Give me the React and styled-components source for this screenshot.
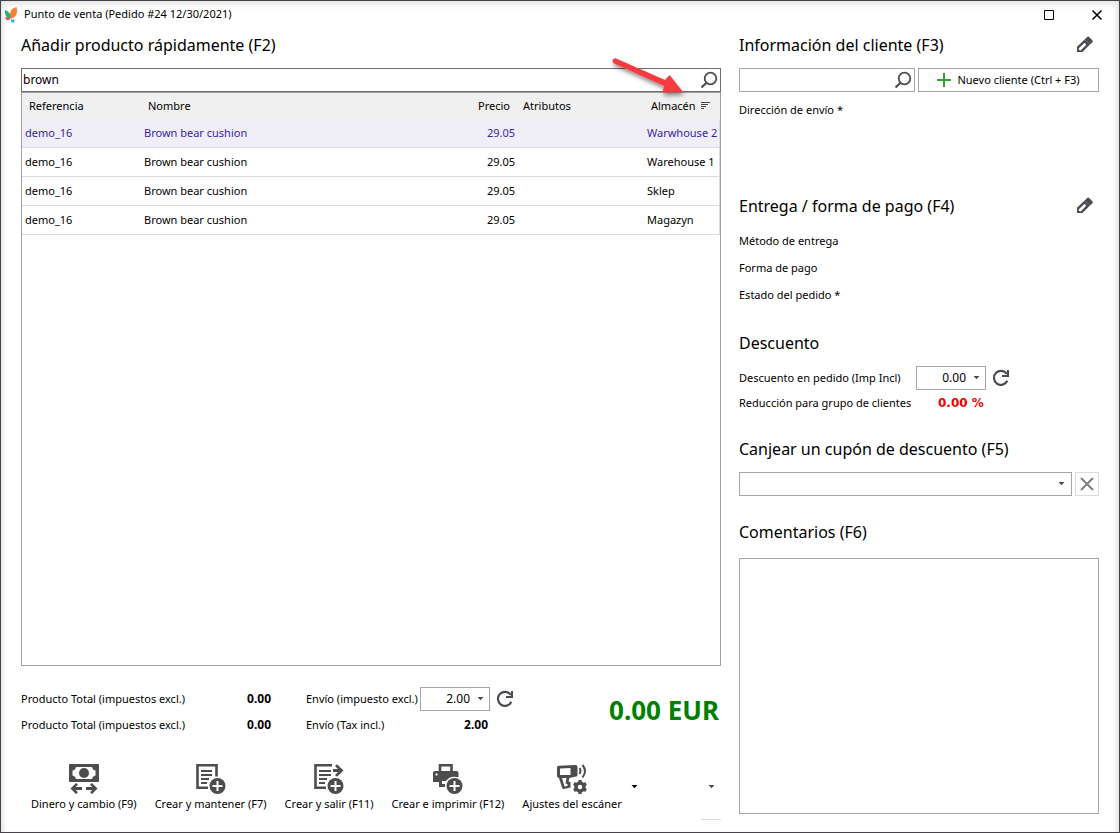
import React, { useState } from "react";
import styled, { createGlobalStyle, css } from "styled-components";

const GlobalStyle = createGlobalStyle`
  *, *::before, *::after {
    box-sizing: border-box;
  }
  body {
    margin: 0;
    background: #fff;
  }
  body, button, input, select, textarea {
    font-family: "Noto Sans", "Open Sans", sans-serif;
    font-size: 11px;
    color: #000;
  }
`;

// Window
const Window = styled.div`
  min-height: 100vh;
  display: flex;
  flex-direction: column;
  padding: 0 20px 12px;
  border: 1px solid #45424a;
  background: #fff;
  box-shadow: inset 0 4px 8px -2px #dedcdf, inset 6px 0 6px -5px #e6e6e8,
    inset -6px 0 6px -5px #e0e0e2;
`;

const TitleBar = styled.header`
  height: 28px;
  display: flex;
  align-items: center;
  gap: 6px;
  margin-left: -17px;
`;

const WindowTitle = styled.h1`
  flex: 1;
  margin: 0;
  padding-bottom: 2px;
  font-size: 11px;
  font-weight: 400;
  line-height: 24px;
`;

const IconButton = styled.button`
  display: flex;
  align-items: center;
  justify-content: center;
  padding: 0;
  border: 0;
  background: none;
  color: #4c4a52;
  cursor: pointer;
`;

const WindowButtons = styled.div`
  display: flex;
  gap: 36px;
  margin-right: -4px;
  ${IconButton} {
    color: #000;
  }
`;

const Body = styled.main`
  flex: 1;
  display: grid;
  grid-template-columns: minmax(0, 35fr) minmax(0, 18fr);
  column-gap: 18px;
`;

// Left column
const Sale = styled.section`
  display: flex;
  flex-direction: column;
`;

const Heading = styled.h2`
  flex: 1;
  margin: 0;
  font-size: 16px;
  font-weight: 400;
  line-height: 32px;
  white-space: nowrap;
`;

const HeadingRow = styled.div`
  display: flex;
  align-items: center;
  height: 32px;
  margin-bottom: 7px;
  ${IconButton} {
    margin-right: 5px;
  }
`;

const Field = styled.div`
  display: flex;
  align-items: center;
  flex: ${(props) => (props.$width ? `0 0 ${props.$width}` : "1")};
  min-width: 0;
  height: 24px;
  border: 1px solid ${(props) => (props.$dark ? "#6e6e6e" : "#a6a6a6")};
  background: #fff;
  ${IconButton} {
    width: ${(props) => (props.$width ? "18px" : "23px")};
    height: 22px;
  }
`;

const TextInput = styled.input`
  flex: 1;
  min-width: 0;
  height: 22px;
  padding: 0 1px 2px;
  border: 0;
  outline: 0;
  background: none;
  font-size: 12px;
  text-align: ${(props) => props.$align || "left"};
`;

const SearchBar = styled.div`
  position: relative;
  display: flex;
`;

const Pointer = styled.svg`
  position: absolute;
  top: -14px;
  right: 30px;
  pointer-events: none;
`;

const TableFrame = styled.div`
  flex: 1;
  border: 1px solid #a0a0a0;
`;

const Table = styled.table`
  width: 100%;
  table-layout: fixed;
  border-collapse: separate;
  border-spacing: 0;
`;

const HeadCell = styled.th`
  width: ${(props) => props.$width || "auto"};
  height: 26px;
  padding: 0 6px 2px 7px;
  background: #f0f0f0;
  font-weight: 400;
  text-align: ${(props) => props.$align || "left"};
  white-space: nowrap;
  svg {
    margin-left: 5px;
  }
`;

const Cell = styled.td`
  height: 29px;
  padding: 0 1px 2px 3px;
  border-bottom: 1px solid #dcdcdc;
  text-align: ${(props) => props.$align || "left"};
  white-space: nowrap;
  &:last-child {
    border-right: 1px solid #dcdcdc;
  }
`;

const Row = styled.tr`
  ${(props) =>
    props.$selected &&
    css`
      background: #f0eef6;
      color: #3a1fa8;
    `}
`;

// Totals
const Totals = styled.div`
  display: flex;
  align-items: flex-start;
  margin-top: 21px;
`;

const TotalsGrid = styled.div`
  display: grid;
  grid-template-columns: ${(props) => props.$columns};
  grid-auto-rows: 24px;
  row-gap: 2px;
  align-items: center;
  margin-right: 35px;
  white-space: nowrap;
  > label,
  > span,
  > output {
    padding-bottom: 2px;
  }
`;

const Amount = styled.output`
  font-size: 12px;
  font-weight: 700;
  text-align: right;
  padding-right: ${(props) => (props.$inset ? "2px" : "0")};
`;

const GrandTotal = styled.output`
  margin-left: auto;
  padding-right: 2px;
  color: #008000;
  font-size: 26px;
  font-weight: 700;
  line-height: 46px;
  white-space: nowrap;
`;

// Bottom toolbar
const Toolbar = styled.div`
  display: flex;
  gap: 18px;
  height: 57px;
  margin-top: 26px;
  padding-left: 10px;
`;

const ToolButton = styled.button`
  display: flex;
  flex-direction: column;
  align-items: center;
  height: 50px;
  padding: 1px 0 0;
  border: 0;
  background: none;
  color: #4d4d4d;
  cursor: pointer;
`;

const ToolLabel = styled.span`
  color: #000;
  line-height: 18px;
  white-space: nowrap;
`;

const MenuButton = styled(IconButton)`
  width: 10px;
  height: 47px;
  margin-left: -10px;
  color: #000;
`;

const OverflowButton = styled(IconButton)`
  width: 20px;
  height: 57px;
  margin-left: auto;
  padding-bottom: 8px;
  border-bottom: 1px solid #dcdcdc;
`;

// Right column
const Side = styled.aside`
  display: flex;
  flex-direction: column;
  padding-bottom: 6px;
`;

const Group = styled.section`
  display: flex;
  flex-direction: column;
  min-height: ${(props) => props.$height || "auto"};
  ${(props) =>
    props.$grow &&
    css`
      flex: 1;
    `}
`;

const Controls = styled.div`
  display: flex;
  align-items: center;
  gap: 3px;
`;

const Line = styled.div`
  display: flex;
  align-items: center;
  height: 27px;
  padding-bottom: 4px;
  ${Controls} + & {
    margin-top: 6px;
  }
`;

const DiscountLine = styled.div`
  display: flex;
  align-items: center;
  height: 24px;
  margin-bottom: 1px;
`;

const FieldLabel = styled.label`
  flex: 0 0 177px;
  padding-bottom: 2px;
  white-space: nowrap;
`;

const DetailLabel = styled.span`
  white-space: nowrap;
`;

const NewCustomerButton = styled.button`
  flex: 0 0 181px;
  height: 24px;
  display: flex;
  align-items: center;
  justify-content: center;
  gap: 6px;
  padding: 0;
  border: 1px solid #a6a6a6;
  background: #fff;
  white-space: nowrap;
  span {
    padding-bottom: 2px;
  }
`;

const Percent = styled.output`
  margin-left: 22px;
  color: #f00000;
  font-family: "DejaVu Sans", sans-serif;
  font-size: 12px;
  font-weight: 700;
`;

const Reload = styled(IconButton)`
  margin-left: 6px;
`;

const SelectFrame = styled.div`
  flex: 1;
  display: grid;
  align-items: center;
  height: 24px;
  border: 1px solid #a6a6a6;
  color: #4c4a52;
  > * {
    grid-area: 1 / 1;
  }
  svg {
    justify-self: end;
    margin-right: 6px;
    pointer-events: none;
  }
`;

const Select = styled.select`
  appearance: none;
  height: 22px;
  padding: 0 20px 0 4px;
  border: 0;
  background: none;
`;

const ClearButton = styled(IconButton)`
  width: 24px;
  height: 24px;
  border: 1px solid #dcdcdc;
  color: #808080;
`;

const Comments = styled.textarea`
  flex: 1;
  margin-top: 3px;
  padding: 4px;
  border: 1px solid #a6a6a6;
  resize: none;
`;

// Icons
const Logo = () => (
  <svg width="14" height="18" viewBox="0 0 14 18" aria-hidden="true">
    <path d="M12.500 1 C7 2.500 5 6 6.300 12.500 C12 12.500 14 7 12.500 1Z" fill="#f58232" />
    <path d="M.8 4 C.8 9.500 2.500 12.300 6.500 12.500 C7 8.500 5 5 .8 4Z" fill="#2fae7d" />
    <path d="M1 11.500 C2 14.500 4 15 6.500 13 C5 11.500 3 11 1 11.500Z" fill="#e8506b" />
    <path d="M7 13 L11 14 L9.500 17 L7 16Z" fill="#35b6e6" />
  </svg>
);

const Magnifier = () => (
  <svg width="18" height="18" viewBox="0 0 18 18" fill="none" stroke="currentColor" aria-hidden="true">
    <circle cx="10.500" cy="7.500" r="5.800" strokeWidth="1.800" />
    <path d="M6.500 11.800 L1.500 16.500" strokeWidth="2.200" />
  </svg>
);

const Pencil = () => (
  <svg width="18" height="18" viewBox="0 0 18 18" fill="currentColor" aria-hidden="true">
    <path
      fillRule="evenodd"
      d="M1 16 V10.800 L8.600 3.400 L14 8.600 L6.400 16Z M2.800 12.200 V13.800 L4.600 14.600 L9.800 9.200 Q10.600 7.400 8.400 6.900Z"
    />
    <path d="M8.600 3.400 L11.500 .8 Q12.200 .3 12.900 .8 L16.600 4.500 Q17.100 5.200 16.600 6 L14 8.600Z" />
  </svg>
);

const Caret = () => (
  <svg width="7" height="4" viewBox="0 0 7 4" fill="currentColor" aria-hidden="true">
    <path d="M0.500 0 H6.500 L3.500 3.300Z" />
  </svg>
);

const ReloadIcon = () => (
  <svg width="18" height="18" viewBox="0 0 18 18" fill="none" stroke="currentColor" aria-hidden="true">
    <path d="M15.300 11.800 A7 7 0 1 1 14.800 5" strokeWidth="2.200" />
    <path d="M16 1 V7 H10" strokeWidth="2" />
  </svg>
);

const SortIcon = () => (
  <svg width="9" height="8" viewBox="0 0 9 8" stroke="#444" aria-hidden="true">
    <path d="M0 .5 H9 M0 2.500 H7 M0 4.500 H5 M0 6.500 H3" strokeWidth="1" />
  </svg>
);

const PlusBadge = () => (
  <>
    <circle cx="21.500" cy="22" r="8" />
    <path d="M21.500 17 V27 M16.500 22 H26.500" stroke="#fff" strokeWidth="2" />
  </>
);

const ToolIcon = ({ children }) => (
  <svg width="30" height="31" viewBox="0 0 30 31" fill="currentColor" aria-hidden="true">
    {children}
  </svg>
);

const CashIcon = () => (
  <ToolIcon>
    <path
      fillRule="evenodd"
      d="M1 0 H29 Q30 0 30 1 V17 Q30 18 29 18 H1 Q0 18 0 17 V1 Q0 0 1 0Z M7 3 Q6.500 6 3.500 6.500 V11.500 Q6.500 12 7 15 H23 Q23.500 12 26.500 11.500 V6.500 Q23.500 6 23 3Z"
    />
    <circle cx="15" cy="9" r="5" />
    <path d="M1.500 24.500 L7 19 L9 20.800 L6.800 23 H13 V26 H6.800 L9 28.200 L7 30Z" />
    <path d="M28.500 24.500 L23 19 L21 20.800 L23.200 23 H17 V26 H23.200 L21 28.200 L23 30Z" />
  </ToolIcon>
);

const SaveIcon = () => (
  <ToolIcon>
    <path d="M20.500 12.500 V1.300 H1.500 V23.700 H12" fill="none" stroke="currentColor" strokeWidth="2.600" />
    <path d="M5 7 H16 M5 11 H16 M5 15 H13 M5 19 H11" stroke="currentColor" strokeWidth="2" />
    <PlusBadge />
  </ToolIcon>
);

const ExitIcon = () => (
  <ToolIcon>
    <path d="M18 1.300 H1.500 V23.700 H12" fill="none" stroke="currentColor" strokeWidth="2.600" />
    <path d="M5 7 H17 M5 11 H17 M5 15 H13 M5 19 H11" stroke="currentColor" strokeWidth="2" />
    <path d="M19 5 H24 L21 2 L23 .3 L29.500 6.500 L23 12.700 L21 11 L24 8 H19Z" />
    <PlusBadge />
  </ToolIcon>
);

const PrintIcon = () => (
  <ToolIcon>
    <path d="M7 7 V1.300 H18.500 V7" fill="none" stroke="currentColor" strokeWidth="2.600" />
    <path d="M2 7 H23.500 Q25.500 7 25.500 9 V13.300 Q17 11 13 17 H9 V20 H12 V23 H6 V18 H0 V9 Q0 7 2 7Z" />
    <path d="M2.500 10.500 H4.500" stroke="#fff" strokeWidth="2" />
    <PlusBadge />
  </ToolIcon>
);

const ScannerIcon = () => (
  <ToolIcon>
    <path
      fillRule="evenodd"
      d="M1.500 1.700 L18.500 1 Q20.500 1 20.500 3 V11 Q20.500 12.500 19 12.600 L12.500 14 L11.500 17.500 L13.500 18 V23.500 L7 25 Q5.500 25 5 23.500 L2 14 Q0 14 0 12 V3.500 Q0 2 1.500 1.700Z M3 4.500 V11 H13.500 V4Z M5 14 L7.500 22.500 L10.500 22 V20 L8.500 19.500 L9.500 14Z"
    />
    <path
      d="M22.500 4 Q24.500 6.500 22.500 10 M25.500 1 Q30.500 7 25.500 13.500"
      fill="none"
      stroke="currentColor"
      strokeWidth="2"
    />
    <circle cx="23" cy="23" r="4" fill="none" stroke="currentColor" strokeWidth="3.400" />
    <path
      d="M23 16 V19 M23 27 V30 M16.900 19.500 L19.500 21 M26.500 25 L29.100 26.500 M16.900 26.500 L19.500 25 M26.500 21 L29.100 19.500"
      stroke="currentColor"
      strokeWidth="3.200"
    />
  </ToolIcon>
);

const products = [
  { reference: "demo_16", name: "Brown bear cushion", price: "29.05", warehouse: "Warwhouse 2" },
  { reference: "demo_16", name: "Brown bear cushion", price: "29.05", warehouse: "Warehouse 1" },
  { reference: "demo_16", name: "Brown bear cushion", price: "29.05", warehouse: "Sklep" },
  { reference: "demo_16", name: "Brown bear cushion", price: "29.05", warehouse: "Magazyn" }
];

const tools = [
  { label: "Dinero y cambio (F9)", icon: CashIcon },
  { label: "Crear y mantener (F7)", icon: SaveIcon },
  { label: "Crear y salir (F11)", icon: ExitIcon },
  { label: "Crear e imprimir (F12)", icon: PrintIcon },
  { label: "Ajustes del escáner", icon: ScannerIcon }
];

const NumberField = ({ id, value }) => (
  <Field $width="70px">
    <TextInput id={id} defaultValue={value} $align="right" />
    <IconButton type="button" aria-label="Abrir calculadora">
      <Caret />
    </IconButton>
  </Field>
);

const ProductTable = () => {
  const [selected, setSelected] = useState(0);
  return (
    <TableFrame>
      <Table>
        <thead>
          <tr>
            <HeadCell $width="119px">Referencia</HeadCell>
            <HeadCell>Nombre</HeadCell>
            <HeadCell $width="60px" $align="right">Precio</HeadCell>
            <HeadCell $width="128px">Atributos</HeadCell>
            <HeadCell $width="76px">
              Almacén
              <SortIcon />
            </HeadCell>
          </tr>
        </thead>
        <tbody>
          {products.map((product, index) => (
            <Row key={product.warehouse} $selected={index === selected} onClick={() => setSelected(index)}>
              <Cell>{product.reference}</Cell>
              <Cell>{product.name}</Cell>
              <Cell $align="right">{product.price}</Cell>
              <Cell />
              <Cell>{product.warehouse}</Cell>
            </Row>
          ))}
        </tbody>
      </Table>
    </TableFrame>
  );
};

export default function App() {
  return (
    <>
      <GlobalStyle />
      <Window>
        <TitleBar>
          <Logo />
          <WindowTitle>Punto de venta (Pedido #24 12/30/2021)</WindowTitle>
          <WindowButtons>
            <IconButton type="button" aria-label="Maximizar">
              <svg width="12" height="12" viewBox="0 0 12 12" fill="none" stroke="currentColor">
                <path d="M1.500 1.500 H10.500 V10.500 H1.500Z" />
              </svg>
            </IconButton>
            <IconButton type="button" aria-label="Cerrar">
              <svg width="12" height="12" viewBox="0 0 12 12" fill="none" stroke="currentColor">
                <path d="M1.500 1.500 L10.500 10.500 M10.500 1.500 L1.500 10.500" strokeWidth="1.500" />
              </svg>
            </IconButton>
          </WindowButtons>
        </TitleBar>

        <Body>
          <Sale>
            <HeadingRow>
              <Heading>Añadir producto rápidamente (F2)</Heading>
            </HeadingRow>
            <SearchBar>
              <Field $dark>
                <TextInput aria-label="Buscar producto" defaultValue="brown" />
                <IconButton type="button" aria-label="Buscar">
                  <Magnifier />
                </IconButton>
              </Field>
              <Pointer width="84" height="46" viewBox="0 0 84 46" aria-hidden="true">
                <defs>
                  <filter id="soft" x="-20%" y="-20%" width="140%" height="160%">
                    <feDropShadow dx="1" dy="3" stdDeviation="2" floodOpacity="0.450" />
                  </filter>
                </defs>
                <path
                  d="M8.500 4.200 L58 26 L62.500 21 L76 38 L55.500 38.500 L57 32 L6.500 9.200 Q4 4.500 8.500 4.200Z"
                  fill="#f73b3f"
                  filter="url(#soft)"
                />
              </Pointer>
            </SearchBar>
            <ProductTable />

            <Totals>
              <TotalsGrid $columns="200px 50px">
                <span>Producto Total (impuestos excl.)</span>
                <Amount>0.00</Amount>
                <span>Producto Total (impuestos excl.)</span>
                <Amount>0.00</Amount>
              </TotalsGrid>
              <TotalsGrid $columns="114px 70px 24px">
                <label htmlFor="shipping">Envío (impuesto excl.)</label>
                <NumberField id="shipping" value="2.00" />
                <Reload type="button" aria-label="Recalcular envío">
                  <ReloadIcon />
                </Reload>
                <span>Envío (Tax incl.)</span>
                <Amount $inset>2.00</Amount>
              </TotalsGrid>
              <GrandTotal>0.00 EUR</GrandTotal>
            </Totals>

            <Toolbar>
              {tools.map(({ label, icon: ToolGlyph }) => (
                <ToolButton key={label} type="button">
                  <ToolGlyph />
                  <ToolLabel>{label}</ToolLabel>
                </ToolButton>
              ))}
              <MenuButton type="button" aria-label="Opciones del escáner">
                <Caret />
              </MenuButton>
              <OverflowButton type="button" aria-label="Más acciones">
                <Caret />
              </OverflowButton>
            </Toolbar>
          </Sale>

          <Side>
            <Group $height="161px">
              <HeadingRow>
                <Heading>Información del cliente (F3)</Heading>
                <IconButton type="button" aria-label="Editar cliente">
                  <Pencil />
                </IconButton>
              </HeadingRow>
              <Controls>
                <Field>
                  <TextInput aria-label="Buscar cliente" />
                  <IconButton type="button" aria-label="Buscar">
                    <Magnifier />
                  </IconButton>
                </Field>
                <NewCustomerButton type="button">
                  <svg width="14" height="14" viewBox="0 0 14 14" stroke="#33a02c" strokeWidth="2" aria-hidden="true">
                    <path d="M7 0 V14 M0 7 H14" />
                  </svg>
                  <span>Nuevo cliente (Ctrl + F3)</span>
                </NewCustomerButton>
              </Controls>
              <Line>
                <DetailLabel>Dirección de envío *</DetailLabel>
              </Line>
            </Group>

            <Group $height="137px">
              <HeadingRow>
                <Heading>Entrega / forma de pago (F4)</Heading>
                <IconButton type="button" aria-label="Editar entrega">
                  <Pencil />
                </IconButton>
              </HeadingRow>
              <Line>
                <DetailLabel>Método de entrega</DetailLabel>
              </Line>
              <Line>
                <DetailLabel>Forma de pago</DetailLabel>
              </Line>
              <Line>
                <DetailLabel>Estado del pedido *</DetailLabel>
              </Line>
            </Group>

            <Group $height="106px">
              <HeadingRow>
                <Heading>Descuento</Heading>
              </HeadingRow>
              <DiscountLine>
                <FieldLabel htmlFor="discount">Descuento en pedido (Imp Incl)</FieldLabel>
                <NumberField id="discount" value="0.00" />
                <Reload type="button" aria-label="Recalcular descuento">
                  <ReloadIcon />
                </Reload>
              </DiscountLine>
              <DiscountLine>
                <FieldLabel as="span">Reducción para grupo de clientes</FieldLabel>
                <Percent>0.00 %</Percent>
              </DiscountLine>
            </Group>

            <Group $height="83px">
              <HeadingRow>
                <Heading as="label" htmlFor="voucher">Canjear un cupón de descuento (F5)</Heading>
              </HeadingRow>
              <Controls>
                <SelectFrame>
                  <Select id="voucher" defaultValue="">
                    <option value="" />
                  </Select>
                  <Caret />
                </SelectFrame>
                <ClearButton type="button" aria-label="Quitar cupón">
                  <svg width="14" height="14" viewBox="0 0 14 14" stroke="currentColor" strokeWidth="2">
                    <path d="M1 1 L13 13 M13 1 L1 13" />
                  </svg>
                </ClearButton>
              </Controls>
            </Group>

            <Group $grow>
              <HeadingRow>
                <Heading as="label" htmlFor="comments">Comentarios (F6)</Heading>
              </HeadingRow>
              <Comments id="comments" />
            </Group>
          </Side>
        </Body>
      </Window>
    </>
  );
}
